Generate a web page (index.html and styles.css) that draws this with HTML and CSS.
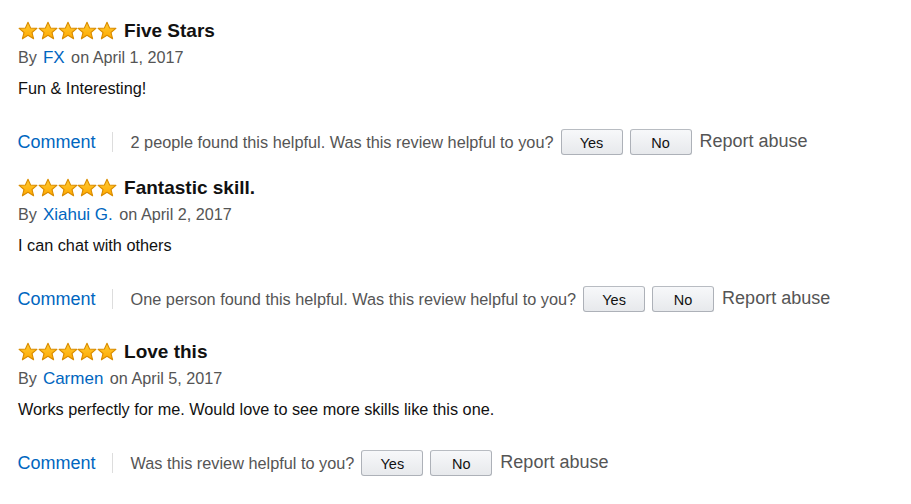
FILE: index.html
```html
<!DOCTYPE html>
<html>
<head>
<meta charset="utf-8">
<link rel="stylesheet" href="styles.css">
</head>
<body>
<svg width="0" height="0" class="defs">
  <defs>
    <linearGradient id="gold" x1="0" y1="0" x2="0" y2="1">
      <stop offset="0" stop-color="#ffcc33"/>
      <stop offset="1" stop-color="#ffa800"/>
    </linearGradient>
    <symbol id="star" viewBox="0 0 20 20">
      <polygon points="10,1.2 12.6,7 18.9,7.4 14,11.5 15.6,17.8 10,14.3 4.4,17.8 6,11.5 1.1,7.4 7.4,7" fill="url(#gold)" stroke="#d98c00" stroke-width="1.1" stroke-linejoin="round"/>
    </symbol>
  </defs>
</svg>
<div class="reviews">
  <div class="review">
    <div class="title-row">
      <span class="stars"><svg><use href="#star"/></svg><svg><use href="#star"/></svg><svg><use href="#star"/></svg><svg><use href="#star"/></svg><svg><use href="#star"/></svg></span>
      <span class="title">Five Stars</span>
    </div>
    <div class="meta">By <a class="link author">FX</a> on April 1, 2017</div>
    <div class="text">Fun &amp; Interesting!</div>
    <div class="actions">
      <a class="link comment">Comment</a>
      <span class="sep"></span>
      <span class="helpful">2 people found this helpful. Was this review helpful to you?</span>
      <button class="btn">Yes</button>
      <button class="btn">No</button>
      <a class="report">Report abuse</a>
    </div>
  </div>
  <div class="review">
    <div class="title-row">
      <span class="stars"><svg><use href="#star"/></svg><svg><use href="#star"/></svg><svg><use href="#star"/></svg><svg><use href="#star"/></svg><svg><use href="#star"/></svg></span>
      <span class="title">Fantastic skill.</span>
    </div>
    <div class="meta">By <a class="link author">Xiahui G.</a> on April 2, 2017</div>
    <div class="text">I can chat with others</div>
    <div class="actions">
      <a class="link comment">Comment</a>
      <span class="sep"></span>
      <span class="helpful">One person found this helpful. Was this review helpful to you?</span>
      <button class="btn">Yes</button>
      <button class="btn">No</button>
      <a class="report">Report abuse</a>
    </div>
  </div>
  <div class="review review-last">
    <div class="title-row">
      <span class="stars"><svg><use href="#star"/></svg><svg><use href="#star"/></svg><svg><use href="#star"/></svg><svg><use href="#star"/></svg><svg><use href="#star"/></svg></span>
      <span class="title">Love this</span>
    </div>
    <div class="meta">By <a class="link author">Carmen</a> on April 5, 2017</div>
    <div class="text">Works perfectly for me. Would love to see more skills like this one.</div>
    <div class="actions">
      <a class="link comment">Comment</a>
      <span class="sep"></span>
      <span class="helpful">Was this review helpful to you?</span>
      <button class="btn">Yes</button>
      <button class="btn">No</button>
      <a class="report">Report abuse</a>
    </div>
  </div>
</div>
</body>
</html>
```

FILE: styles.css
```css
html, body {
  margin: 0;
  padding: 0;
  background: #ffffff;
}
body {
  font-family: "Liberation Sans", Arial, sans-serif;
  color: #111111;
}
.defs {
  position: absolute;
  width: 0;
  height: 0;
}
.reviews {
  padding: 19px 18px 0 18px;
  display: flex;
  flex-direction: column;
}
.review {
  display: flex;
  flex-direction: column;
  margin-bottom: 21px;
}
.review + .review-last {
  margin-top: 7px;
}
.title-row {
  display: flex;
  align-items: center;
  height: 24px;
}
.stars {
  display: flex;
  margin-top: -1px;
}
.stars svg {
  width: 20px;
  height: 20px;
  margin-right: -0.2px;
}
.title {
  font-weight: bold;
  font-size: 19px;
  margin-left: 7px;
  color: #111;
}
.meta {
  margin-top: 3px;
  font-size: 16.2px;
  line-height: 22px;
  height: 22px;
  color: #555555;
}
.link {
  color: #0066c0;
  text-decoration: none;
}
.author {
  margin: 0 2px 0 1.5px;
  font-size: 17px;
  line-height: 1;
}
.text {
  margin-top: 9px;
  font-size: 16.25px;
  line-height: 22px;
  color: #111111;
}
.actions {
  margin-top: 30px;
  display: flex;
  align-items: center;
  height: 26px;
  font-size: 18px;
}
.comment {
  margin-left: -0.5px;
}
.sep {
  width: 1px;
  height: 20px;
  background: #dddddd;
  margin: 0 18px 0 16px;
}
.helpful {
  color: #555555;
  font-size: 16.3px;
}
.btn {
  font-family: "Liberation Sans", Arial, sans-serif;
  font-size: 14.5px;
  color: #111111;
  width: 62px;
  height: 26px;
  margin-left: 7px;
  padding: 2px 0 0 0;
  border: 1px solid #adb1b8;
  border-top-color: #b8bcc2;
  border-radius: 3px;
  background: linear-gradient(#f7f8fa, #e7e9ec);
}
.report {
  color: #555555;
  margin-left: 8px;
  margin-bottom: 2px;
}
```
